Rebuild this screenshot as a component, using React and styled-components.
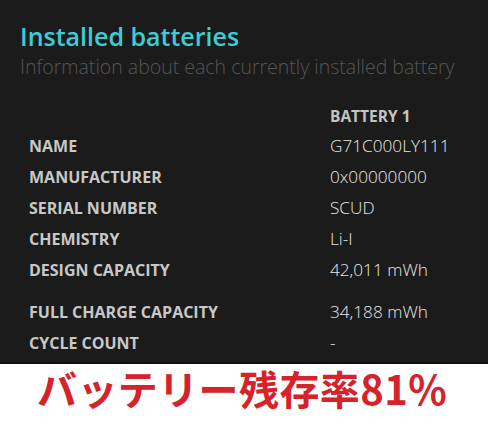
import React from 'react';
import styled, { createGlobalStyle } from 'styled-components';

const GlobalStyle = createGlobalStyle`
    html, body {
        margin: 0;
        padding: 0;
        background: #ffffff;
    }
    body {
        width: 488px;
        height: 424px;
        overflow: hidden;
    }
`;

const Page = styled.div`
    width: 488px;
    height: 424px;
    display: flex;
    flex-direction: column;
`;

const Panel = styled.section`
    height: 364px;
    background: #1b1b1b;
    border-bottom: 2px solid #0f0f0f;
    padding: 18px 0 0 20px;
    box-sizing: border-box;
    font-family: "Open Sans", "Noto Sans", sans-serif;
`;

const Title = styled.h1`
    margin: 0;
    font-size: 25px;
    font-weight: 600;
    line-height: 36px;
    color: #3ccdd6;
`;

const Subtitle = styled.p`
    margin: 0;
    font-size: 19.5px;
    font-weight: 300;
    line-height: 26px;
    color: #555555;
    white-space: nowrap;
`;

const Table = styled.div`
    margin-top: 22px;
    padding-left: 9px;
    display: flex;
    flex-direction: column;
`;

const Row = styled.div`
    display: grid;
    grid-template-columns: 301px 1fr;
    align-items: center;
    height: ${p => p.$height}px;
    padding-top: ${p => (p.$gap ? 11 : 0)}px;
    box-sizing: border-box;
`;

const Header = styled.div`
    grid-column: 2;
    font-size: 15.5px;
    font-weight: 700;
    color: #c4c4c4;
`;

const Label = styled.div`
    font-size: 16px;
    font-weight: 700;
    color: #c8c8c8;
`;

const Value = styled.div`
    font-size: 17.2px;
    font-weight: 300;
    color: #e8e8e8;
`;

const Banner = styled.div`
    flex: 1;
    display: flex;
    align-items: center;
    padding: 0 0 13px 37px;
    font-family: "Noto Sans CJK JP", sans-serif;
    font-weight: 700;
    font-size: 40px;
    letter-spacing: 0.4px;
    color: #d6222b;
    line-height: 1;
`;

const rows = [
    ['NAME', 'G71C000LY111'],
    ['MANUFACTURER', '0x00000000'],
    ['SERIAL NUMBER', 'SCUD'],
    ['CHEMISTRY', 'Li-I'],
    ['DESIGN CAPACITY', '42,011 mWh'],
    ['FULL CHARGE CAPACITY', '34,188 mWh', true],
    ['CYCLE COUNT', '-'],
];

const App = () => {
    return (
        <Page>
            <GlobalStyle />
            <Panel>
                <Title>Installed batteries</Title>
                <Subtitle>Information about each currently installed battery</Subtitle>
                <Table>
                    <Row $height={28}>
                        <Header>BATTERY 1</Header>
                    </Row>
                    {rows.map(([label, value, gap]) => (
                        <Row key={label} $height={gap ? 42 : 31} $gap={gap}>
                            <Label>{label}</Label>
                            <Value>{value}</Value>
                        </Row>
                    ))}
                </Table>
            </Panel>
            <Banner>バッテリー残存率81%</Banner>
        </Page>
    );
};

export default App;
